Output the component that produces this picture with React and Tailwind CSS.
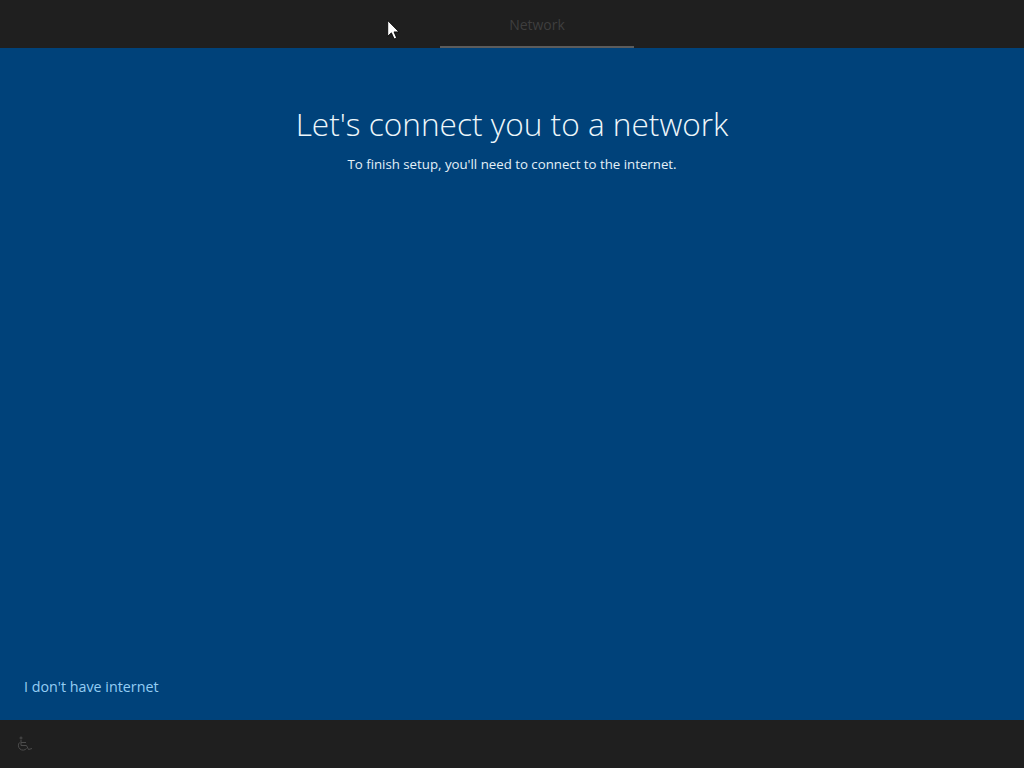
export default function App() {
  return (
    <div className="relative flex flex-col h-screen w-full overflow-hidden bg-[#00427a] font-['Open_Sans',sans-serif]">
      <header className="h-12 shrink-0 bg-[#1f1f1f] pl-[440px]">
        <div className="w-[194px] h-12 border-b-2 border-[#5c5c5c] flex items-center justify-center pt-[3px]">
          <span className="text-[14px] text-[#3e3e3e]">Network</span>
        </div>
      </header>

      <main className="flex-1 flex flex-col items-center pt-[53px] relative">
        <h1 className="text-[31.6px] leading-[46px] font-light text-[#eef7fb]">Let's connect you to a network</h1>
        <p className="mt-[7px] text-[13.25px] leading-5 text-[#e3f0f8]">To finish setup, you'll need to connect to the internet.</p>
        <div className="mt-auto self-start pl-6 pb-[22px]">
          <button className="text-[14.3px] leading-5 text-[#94cdf4]">I don't have internet</button>
        </div>
      </main>

      <footer className="h-12 shrink-0 bg-[#1f1f1f] flex items-center pl-4">
        <svg width="17" height="16" viewBox="0 0 17 16" fill="none" stroke="#4c4c4c" strokeWidth="1">
          <circle cx="5" cy="2" r="1" />
          <path d="M5 4V9.5H10.5L12.5 13.5L16 12.5" />
          <path d="M5 6.5H10" />
          <path d="M3.5 6.5A4.5 4.5 0 1 0 10.5 12.5" />
        </svg>
      </footer>

      <svg className="absolute left-[387px] top-[20px]" width="13" height="20" viewBox="0 0 12 19">
        <path d="M0.5 0.5V15.5L4 12.2L6.6 18L9 17L6.5 11.3H11.2Z" fill="#ffffff" stroke="#000000" strokeWidth="0.8" />
      </svg>
    </div>
  );
}
